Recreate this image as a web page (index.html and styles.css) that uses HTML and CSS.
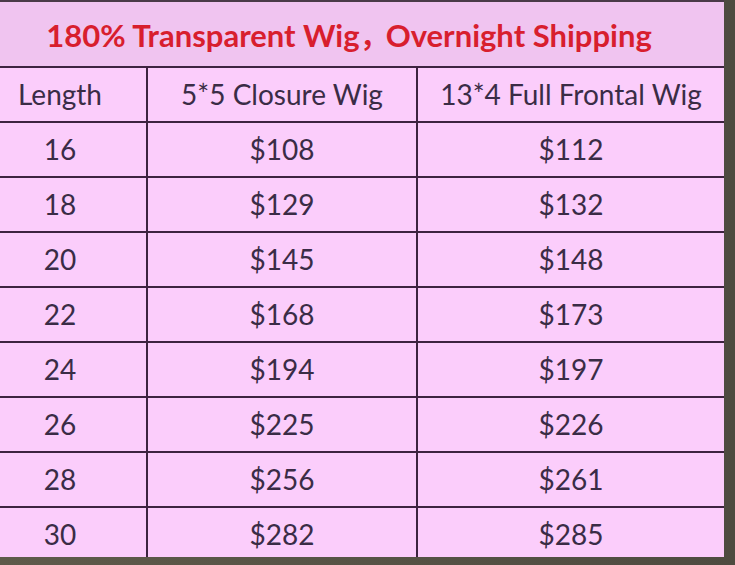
FILE: index.html
```html
<!DOCTYPE html>
<html>
<head>
<meta charset="utf-8">
<link rel="stylesheet" href="styles.css">
</head>
<body>
<div class="frame">
  <div class="sheet">
    <div class="title">180% Transparent Wig<span class="comma">，</span>Overnight Shipping</div>
    <div class="grid">
      <div class="cell">Length</div><div class="cell">5*5 Closure Wig</div><div class="cell">13*4 Full Frontal Wig</div>
      <div class="cell">16</div><div class="cell">$108</div><div class="cell">$112</div>
      <div class="cell">18</div><div class="cell">$129</div><div class="cell">$132</div>
      <div class="cell">20</div><div class="cell">$145</div><div class="cell">$148</div>
      <div class="cell">22</div><div class="cell">$168</div><div class="cell">$173</div>
      <div class="cell">24</div><div class="cell">$194</div><div class="cell">$197</div>
      <div class="cell">26</div><div class="cell">$225</div><div class="cell">$226</div>
      <div class="cell">28</div><div class="cell">$256</div><div class="cell">$261</div>
      <div class="cell">30</div><div class="cell">$282</div><div class="cell">$285</div>
    </div>
  </div>
</div>
</body>
</html>
```
FILE: styles.css
```css
html, body {
  margin: 0;
  padding: 0;
  background: #58543f;
}
.frame {
  width: 735px;
  height: 565px;
  overflow: hidden;
  background: linear-gradient(90deg, #5e5a4a, #4e4b40);
}
.sheet {
  width: 750px;
  height: 555px;
  margin-left: -26px;
  overflow: hidden;
  background: #fbcdfb;
  border-top: 2px solid #4a3a48;
  box-shadow: 0 -1px 0 #cfc6c6;
  font-family: Lato, "Liberation Sans", sans-serif;
  color: #3a2c46;
}
.title {
  height: 64px;
  display: flex;
  align-items: center;
  justify-content: center;
  background: #f0c4f0;
  color: #d81e2e;
  font-weight: bold;
  font-size: 31px;
  padding-top: 2px;
  box-sizing: border-box;
}
.comma {
  font-family: "Noto Sans CJK SC", sans-serif;
  font-size: 28px;
  margin-right: -2px;
}
.grid {
  display: grid;
  grid-template-columns: 172px 270px 308px;
  grid-auto-rows: 55px;
}
.cell {
  border-top: 2px solid #3d2340;
  display: flex;
  align-items: center;
  justify-content: center;
  font-size: 28px;
  padding-bottom: 2px;
}
.cell:nth-child(3n+2), .cell:nth-child(3n) {
  border-left: 2px solid #3d2340;
}
```
